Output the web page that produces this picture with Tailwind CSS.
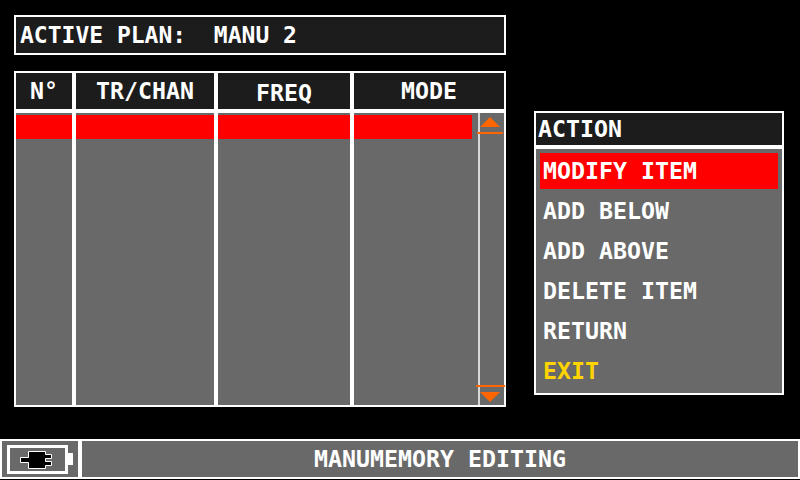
<!DOCTYPE html>
<html lang="en">
<head>
  <meta charset="UTF-8">
  <title>Manumemory Editing</title>
  <script src="https://cdn.jsdelivr.net/npm/@tailwindcss/browser@4"></script>
</head>
<body class="bg-black">
  <div class="w-[800px] h-[480px] bg-black overflow-hidden flex flex-col text-white text-[23.25px] leading-none font-bold font-['DejaVu_Sans_Mono',monospace]">

    <div class="h-[439px] shrink-0 flex">
      <!-- left column -->
      <div class="ml-[14px] w-[492px] pt-[15px]">
        <div class="h-[40px] border-2 border-white bg-[#1c1c1c] flex items-center pl-[4px] text-[23px] whitespace-pre">ACTIVE PLAN:  MANU 2</div>

        <div class="mt-[16px] h-[336px] border-2 border-white bg-white grid grid-cols-[56px_138px_132px_150px] grid-rows-[36px_292px] gap-x-[4px] gap-y-[4px]">
          <div class="bg-[#1c1c1c] flex items-center justify-center">N°</div>
          <div class="bg-[#1c1c1c] flex items-center justify-center">TR/CHAN</div>
          <div class="bg-[#1c1c1c] flex items-center justify-center pt-[4px]">FREQ</div>
          <div class="bg-[#1c1c1c] flex items-center justify-center">MODE</div>

          <div class="bg-[#696969] pt-[2px]"><div class="h-[24px] bg-[#ff0000]"></div></div>
          <div class="bg-[#696969] pt-[2px]"><div class="h-[24px] bg-[#ff0000]"></div></div>
          <div class="bg-[#696969] pt-[2px]"><div class="h-[24px] bg-[#ff0000]"></div></div>
          <div class="bg-[#696969] flex">
            <div class="w-[124px] pt-[2px]"><div class="w-[118px] h-[24px] bg-[#ff0000]"></div></div>
            <!-- scrollbar -->
            <div class="w-[26px] border-l-2 border-[#d8d8d8] flex flex-col items-center justify-between pt-[4px] pb-[3px] pr-[4px]">
              <div class="flex flex-col items-center">
                <svg width="20" height="10" viewBox="0 0 20 10"><path d="M10 0 L20 10 L0 10 Z" fill="#ff6600"/></svg>
                <div class="w-[26px] h-[2px] mt-[5px] bg-[#ff6600]"></div>
              </div>
              <div class="flex flex-col items-center">
                <div class="w-[29px] h-[2px] mb-[5px] bg-[#ff6600]"></div>
                <svg width="20" height="10" viewBox="0 0 20 10"><path d="M0 0 L20 0 L10 10 Z" fill="#ff6600"/></svg>
              </div>
            </div>
          </div>
        </div>
      </div>

      <!-- action menu -->
      <div class="ml-[28px] mt-[111px] w-[250px] h-[284px] border-2 border-white bg-[#696969] flex flex-col">
        <div class="h-[32px] bg-[#1c1c1c] flex items-center pl-[2px]">ACTION</div>
        <div class="h-[4px] bg-white"></div>
        <div class="px-[4px] pt-[4px]">
          <div class="h-[36px] bg-[#ff0000] flex items-center pl-[3px]">MODIFY ITEM</div>
          <div class="h-[40px] flex items-center pl-[3px] mt-[2px]">ADD BELOW</div>
          <div class="h-[40px] flex items-center pl-[3px]">ADD ABOVE</div>
          <div class="h-[40px] flex items-center pl-[3px]">DELETE ITEM</div>
          <div class="h-[40px] flex items-center pl-[3px]">RETURN</div>
          <div class="h-[40px] flex items-center pl-[3px] text-[#ffd400]">EXIT</div>
        </div>
      </div>
    </div>

    <!-- status bar -->
    <div class="h-[40px] shrink-0 border-2 border-white bg-[#696969] flex">
      <div class="w-[76px] flex items-center pl-[4px]">
        <svg width="68" height="34" viewBox="0 0 68 34">
          <rect x="2.5" y="4.5" width="58" height="26" fill="none" stroke="#fff" stroke-width="3"/>
          <rect x="62" y="11" width="5" height="12" fill="#fff"/>
          <path d="M14.5 15.5 H22.5 V9.5 H39.5 V12.5 H45.5 V16.5 H39.5 V19.5 H45.5 V23.5 H39.5 V26.5 H22.5 V20.5 H14.5 Z" fill="#000" stroke="#fff"/>
        </svg>
      </div>
      <div class="w-[4px] bg-white"></div>
      <div class="flex-1 flex items-center justify-center">MANUMEMORY EDITING</div>
    </div>
  </div>
</body>
</html>
